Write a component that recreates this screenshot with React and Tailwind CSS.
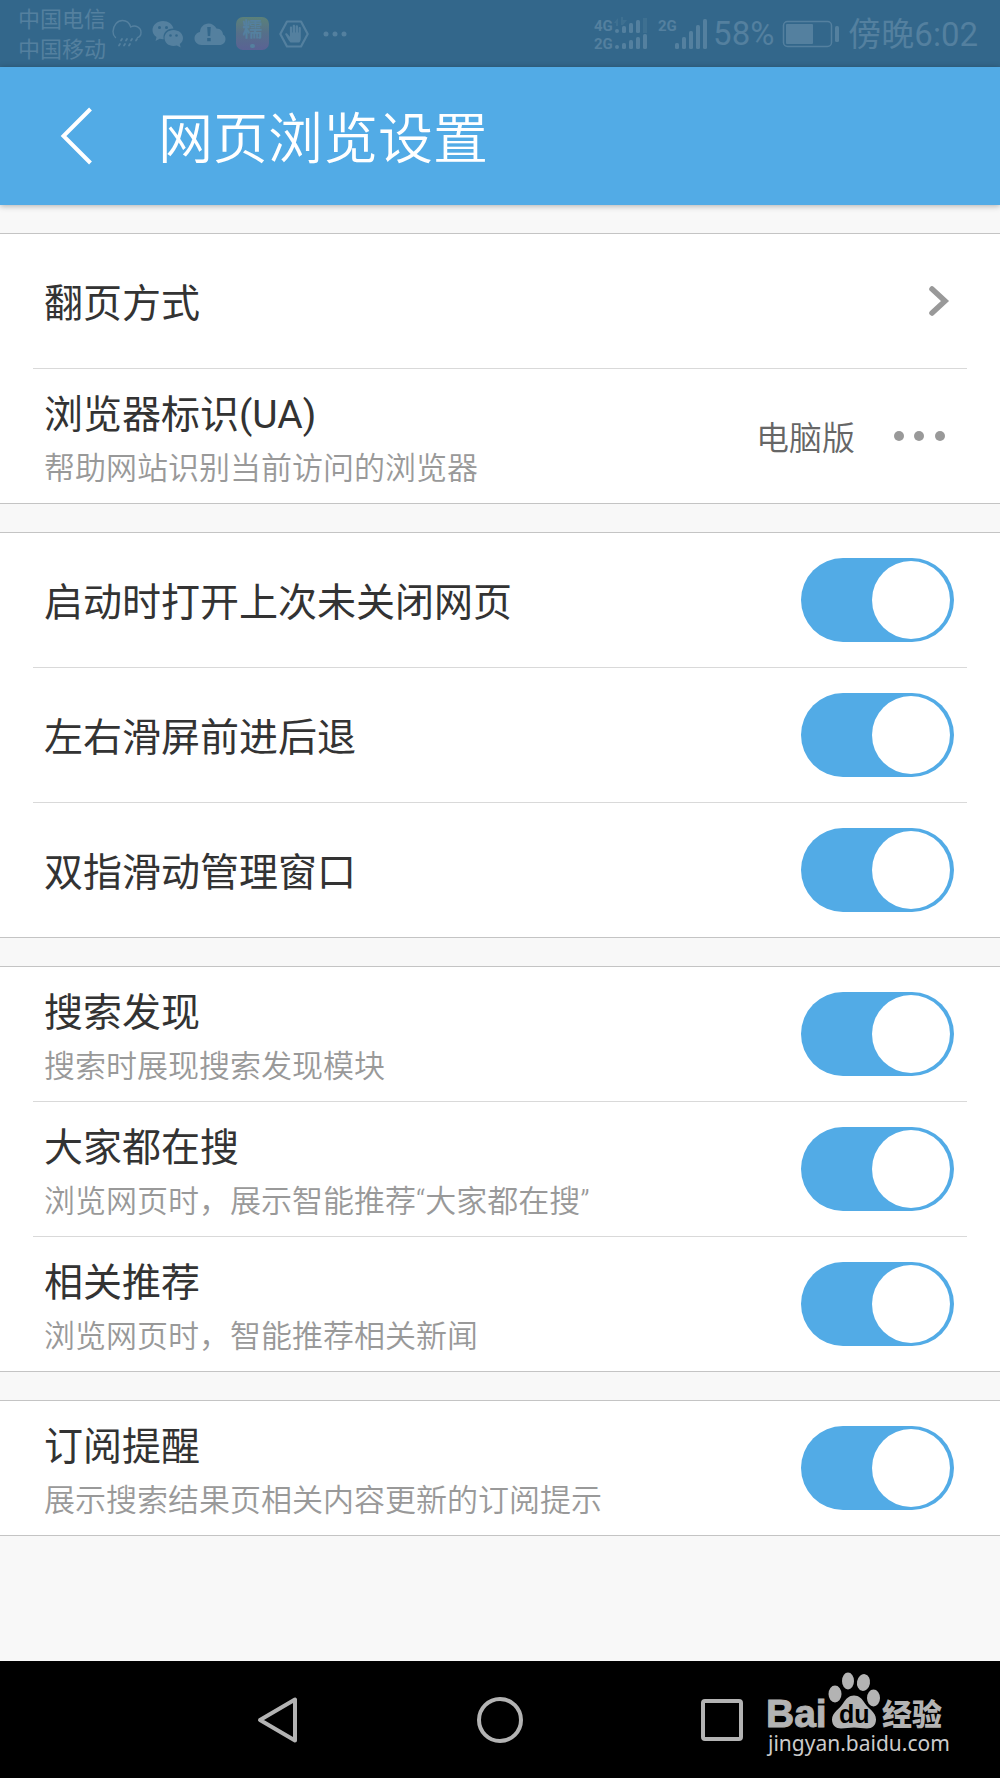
import React from "react";

const FONT = "font-[Roboto,'Noto_Sans_CJK_SC',sans-serif]";

function RainIcon() {
  return (
    <svg className="h-[30px] w-[30px]" viewBox="0 0 30 30" fill="none" stroke="currentColor" strokeLinecap="round" aria-hidden="true">
      <path strokeWidth="1.4" d="M3.5 18.5C1.8 17 1 15 1 12.500C1.500 6 5.500 1.500 10.500 1.500C14.500 1.500 17.500 4 18.700 8C23.500 5.500 29 8.500 29 13.500C29 16 27.500 18 25.500 18.700" />
      <path strokeWidth="1.8" d="M10 20l-1 1.500M15 20l-1 1.500M20 20l-1 1.500M25 20l-1 1.500M8 25l-1 1.500M13 25l-1 1.500M18 25l-1 1.500" />
    </svg>
  );
}

function WechatIcon() {
  return (
    <svg className="h-[28px] w-[32px]" viewBox="0 0 32 28" aria-hidden="true">
      <path fill="currentColor" d="M11 1C5 1 .5 5 .5 10c0 3 1.500 5.400 4 7l-1 4 4.200-2.200c1 .3 2.200.4 3.300.4h.7C10.500 13 15 8.500 21.500 8.600C20.500 4 16.200 1 11 1Z" />
      <path fill="currentColor" d="M21.500 10C16.300 10 12.500 13.600 12.500 18s3.800 8 9 8c1.200 0 2.300-.2 3.400-.5l3.800 2-.9-3.400c2.100-1.500 3.200-3.600 3.200-6.100C31 13.600 26.700 10 21.500 10Z" />
      <g fill="#33678b">
        <circle cx="7.500" cy="7.500" r="1.500" />
        <circle cx="14.500" cy="7.500" r="1.500" />
        <circle cx="18.500" cy="15.500" r="1.300" />
        <circle cx="24.500" cy="15.500" r="1.300" />
      </g>
    </svg>
  );
}

function CloudAlertIcon() {
  return (
    <svg className="h-[24px] w-[32px]" viewBox="0 0 32 24" aria-hidden="true">
      <path fill="currentColor" d="M7.500 23C3.500 23 .5 20 .5 16.500C.5 13 3 10.500 6 10C6.300 5 10 1.500 14.500 1.500c3.500 0 6.500 2 7.900 5C27 6.500 29 10 29 12.500c1.700.8 2.500 2.500 2.500 4.500 0 3.500-2.500 6-6 6Z" />
      <path fill="#33678b" d="M13.200 5h3.600l-.6 9h-2.400ZM13.200 16h3.500v3.300h-3.500Z" />
    </svg>
  );
}

function NuomiIcon() {
  return (
    <span className="flex h-[33px] w-[33px] flex-col items-center overflow-hidden rounded-[7px] bg-linear-to-b from-[#5b8179] via-[#556f8a] to-[#5a6294]">
      <span className="text-[20px] leading-[27px] font-bold">糯</span>
      <span className="h-[4px] w-[5px] rounded-full bg-current" />
    </span>
  );
}

function HandIcon() {
  return (
    <svg className="h-[28px] w-[30px]" viewBox="0 0 30 28" aria-hidden="true">
      <path fill="none" stroke="currentColor" strokeWidth="2.200" strokeLinejoin="round" d="M8 1.500h14L28.700 14 22 26.500H8L1.300 14Z" />
      <path fill="currentColor" d="M11.500 22.500C9.500 20.500 7.500 16.500 6.300 14.500c-.4-1.200 1.200-1.800 2-.8l2.600 3V7.500c0-1.400 2.200-1.400 2.200 0v5h.6V5.900c0-1.500 2.400-1.500 2.400 0v6.600h.6V6.400c0-1.400 2.300-1.400 2.300 0v6.100h.6V8c0-1.300 2.200-1.300 2.200 0v10c0 2-.6 3.500-1.600 4.500Z" />
    </svg>
  );
}

function DualSignal() {
  return (
    <svg className="h-[38px] w-[54px]" viewBox="0 -2 54 38" fill="currentColor" aria-hidden="true">
      <g fontSize="15" fontWeight="700" fontFamily="Roboto, sans-serif">
        <text x="0" y="14">4G</text>
        <text x="0" y="32">2G</text>
      </g>
      <path opacity=".35" d="M20 6l4-5v8h-2V6ZM29 3l4 0-4 5h-2V0h2ZM49 1h4v15h-4Z" />
      <circle cx="23" cy="14" r="2" />
      <rect x="28" y="9" width="4" height="7" rx="1.500" />
      <rect x="35" y="6" width="4" height="10" rx="1.500" />
      <rect x="42" y="3" width="4" height="13" rx="1.500" />
      <circle cx="23" cy="30" r="2" />
      <rect x="28" y="26" width="4" height="6" rx="1.500" />
      <rect x="35" y="23" width="4" height="9" rx="1.500" />
      <rect x="42" y="20" width="4" height="12" rx="1.500" />
      <rect x="49" y="17" width="4" height="15" rx="1.500" />
    </svg>
  );
}

function SingleSignal() {
  return (
    <svg className="h-[38px] w-[49px]" viewBox="0 -2 49 38" fill="currentColor" aria-hidden="true">
      <text x="0" y="14" fontSize="15" fontWeight="700" fontFamily="Roboto, sans-serif">2G</text>
      <rect x="17" y="26" width="4" height="6" rx="1.500" />
      <rect x="24" y="20" width="4" height="12" rx="1.500" />
      <rect x="31" y="14" width="4" height="18" rx="1.500" />
      <rect x="38" y="8" width="4" height="24" rx="1.500" />
      <rect x="45" y="2" width="4" height="30" rx="1.500" />
    </svg>
  );
}

function Battery() {
  return (
    <svg className="h-[28px] w-[58px]" viewBox="0 0 58 28" fill="none" aria-hidden="true">
      <rect x="1.500" y="1.500" width="48" height="25" rx="4" stroke="currentColor" strokeWidth="1.500" />
      <rect x="4" y="4" width="27" height="20" rx="1" fill="currentColor" />
      <rect x="53" y="6" width="4" height="16" rx="1.500" fill="currentColor" />
    </svg>
  );
}

function StatusBar() {
  return (
    <div className="flex h-[67px] items-center justify-between bg-[#33678b] pr-[22px] pl-[18px] text-[#54809f]">
      <div className="flex items-center">
        <div className="w-[94px] pt-[2px] text-[22px] leading-[30px]">
          <div>中国电信</div>
          <div>中国移动</div>
        </div>
        <div className="flex items-center gap-[10px]">
          <RainIcon />
          <WechatIcon />
          <CloudAlertIcon />
          <NuomiIcon />
          <HandIcon />
        </div>
        <svg className="ml-[14px] h-[6px] w-[24px]" viewBox="0 0 24 6" fill="currentColor" aria-hidden="true">
          <circle cx="3" cy="3" r="2.500" />
          <circle cx="12" cy="3" r="2.500" />
          <circle cx="21" cy="3" r="2.500" />
        </svg>
      </div>
      <div className="flex items-center">
        <div className="flex items-center gap-[10px]">
          <DualSignal />
          <SingleSignal />
        </div>
        <span className="ml-[6px] text-[33px] leading-[40px]">58%</span>
        <div className="ml-[8px]">
          <Battery />
        </div>
        <span className="ml-[8px] pt-[2px] text-[33px] leading-[40px]">傍晚6:02</span>
      </div>
    </div>
  );
}

function Header() {
  return (
    <header className="relative flex h-[138px] items-center bg-[#52abe6] pl-[60px] text-white shadow-[0_1px_6px_rgba(0,0,0,0.3)]">
      <button type="button" aria-label="返回" className="flex w-[98px] items-center">
        <svg className="h-[58px] w-[34px]" viewBox="0 0 34 58" fill="none" stroke="currentColor" strokeWidth="4" aria-hidden="true">
          <path d="M30.500 2L3.500 29L30.500 56" />
        </svg>
      </button>
      <h1 className="pt-[6px] text-[55px] leading-[72px] font-[350]">网页浏览设置</h1>
    </header>
  );
}

function Switch({ id }) {
  return (
    <input
      id={id}
      type="checkbox"
      role="switch"
      defaultChecked
      className="inline-flex h-[84px] w-[153px] shrink-0 appearance-none items-center rounded-full bg-[#cccccc] px-[4px] before:block before:size-[78px] before:rounded-full before:bg-white before:content-[''] checked:justify-end checked:bg-[#52abe6]"
    />
  );
}

function Row({ id, title, note, children }) {
  const Title = id ? "label" : "span";
  return (
    <div className="mx-[33px] flex h-[135px] items-center justify-between border-b border-[#d9d9d9] pr-[13px] pl-[11px] last:mx-0 last:border-[#c4c4c4] last:pr-[46px] last:pl-[44px]">
      <div className={note ? "flex flex-col pt-[12px]" : "flex flex-col pt-[6px]"}>
        <Title htmlFor={id} className="text-[39px] leading-[54px] text-[#333333]">{title}</Title>
        {note && <span className="text-[31px] leading-[54px] font-[350] text-[#999999]">{note}</span>}
      </div>
      {children}
    </div>
  );
}

function Group({ children }) {
  return <section className="border-t border-[#c4c4c4] bg-white">{children}</section>;
}

const switchGroups = [
  [
    { id: "restore", title: "启动时打开上次未关闭网页" },
    { id: "swipe", title: "左右滑屏前进后退" },
    { id: "twofinger", title: "双指滑动管理窗口" },
  ],
  [
    { id: "discover", title: "搜索发现", note: "搜索时展现搜索发现模块" },
    { id: "trending", title: "大家都在搜", note: "浏览网页时，展示智能推荐“大家都在搜”" },
    { id: "related", title: "相关推荐", note: "浏览网页时，智能推荐相关新闻" },
  ],
  [{ id: "subscribe", title: "订阅提醒", note: "展示搜索结果页相关内容更新的订阅提示" }],
];

function Watermark() {
  return (
    <svg className="absolute right-[50px] bottom-[16px] h-[90px] w-[184px]" viewBox="0 0 184 90" fill="#b3b3b3" role="img" aria-label="Baidu 经验">
      <text x="0" y="55" fontSize="39" fontWeight="700" fontFamily="'Liberation Sans', sans-serif" stroke="#b3b3b3" strokeWidth="1">Bai</text>
      <ellipse cx="69" cy="22" rx="6.500" ry="8.500" />
      <ellipse cx="82" cy="9" rx="6" ry="8.500" />
      <ellipse cx="97.500" cy="10.500" rx="6.500" ry="8.500" transform="rotate(10 97.500 10.500)" />
      <ellipse cx="107.500" cy="26" rx="6.500" ry="8.500" />
      <path d="M88 23.500c5 0 8 3 11 8s11 8.500 11 16c0 6-4 9-9 9-5 0-8-1-13-1s-8 1-13 1c-5 0-9-3-9-9 0-7 8-11 11-16s6-8 11-8Z" />
      <text x="73" y="51" fontSize="25" fontWeight="700" fontFamily="'Liberation Sans', sans-serif" fill="#000000">du</text>
      <text x="116" y="53" fontSize="30" fontWeight="900" fontFamily="'Noto Sans CJK SC', sans-serif">经验</text>
      <text x="2" y="79" fontSize="21" fontFamily="'Noto Sans', sans-serif" fill="#cccccc">jingyan.baidu.com</text>
    </svg>
  );
}

function NavBar() {
  return (
    <nav className="relative mt-auto flex h-[117px] items-center justify-center gap-[174px] bg-black text-[#b3b3b3]">
      <button type="button" aria-label="后退">
        <svg className="size-[48px]" viewBox="0 0 48 48" fill="none" stroke="currentColor" strokeWidth="4" strokeLinejoin="round" aria-hidden="true">
          <path d="M41 3.500v41L6 24Z" />
        </svg>
      </button>
      <button type="button" aria-label="主屏幕">
        <svg className="size-[48px]" viewBox="0 0 48 48" fill="none" stroke="currentColor" strokeWidth="4" aria-hidden="true">
          <circle cx="24" cy="24" r="21" />
        </svg>
      </button>
      <button type="button" aria-label="最近任务">
        <svg className="size-[48px]" viewBox="0 0 48 48" fill="none" stroke="currentColor" strokeWidth="4" aria-hidden="true">
          <rect x="5" y="5" width="38" height="38" rx="2" />
        </svg>
      </button>
      <Watermark />
    </nav>
  );
}

export default function App() {
  return (
    <div className={`flex min-h-screen flex-col bg-[#f8f8f8] ${FONT}`} lang="zh-CN">
      <StatusBar />
      <Header />
      <main className="flex flex-col gap-[28px] py-[28px]">
        <Group>
          <Row title="翻页方式">
            <button type="button" aria-label="选择翻页方式" className="mr-[4px]">
              <svg className="h-[32px] w-[24px]" viewBox="0 0 24 32" fill="none" stroke="#999999" strokeWidth="5.500" strokeLinecap="round" strokeLinejoin="miter" aria-hidden="true">
                <path d="M6 4L19 16L6 28" />
              </svg>
            </button>
          </Row>
          <Row title="浏览器标识(UA)" note="帮助网站识别当前访问的浏览器">
            <button type="button" className="mr-[9px] flex items-center gap-[38px] text-[33px] leading-[48px] text-[#666666]">
              <span className="pt-[6px] font-[350]">电脑版</span>
              <svg className="h-[10px] w-[52px]" viewBox="0 0 52 10" fill="#999999" aria-hidden="true">
                <circle cx="6" cy="5" r="5" />
                <circle cx="26" cy="5" r="5" />
                <circle cx="47" cy="5" r="5" />
              </svg>
            </button>
          </Row>
        </Group>
        {switchGroups.map((rows) => (
          <Group key={rows[0].id}>
            {rows.map((row) => (
              <Row key={row.id} {...row}>
                <Switch id={row.id} />
              </Row>
            ))}
          </Group>
        ))}
      </main>
      <NavBar />
    </div>
  );
}
